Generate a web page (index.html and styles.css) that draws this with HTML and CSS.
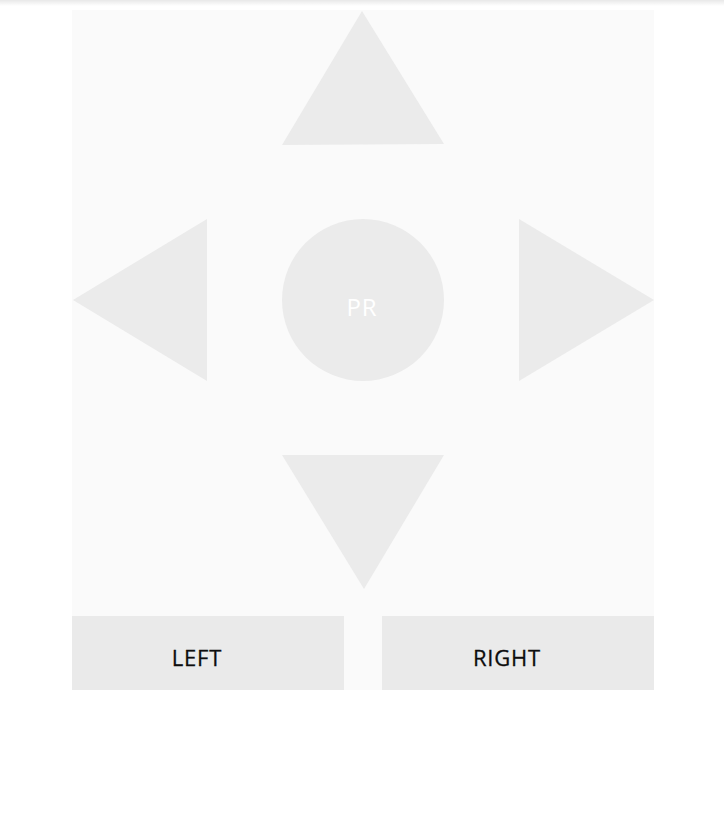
FILE: index.html
```html
<!DOCTYPE html>
<html>
<head>
<meta charset="utf-8">
<link rel="stylesheet" href="styles.css">
</head>
<body>
<div class="appbar-shadow"></div>
<main class="panel">
  <div class="pad">
    <div class="cell"></div>
    <svg class="shape up" viewBox="0 0 162 134" width="162" height="134"><polygon points="80,0 162,133 0,134"/></svg>
    <div class="cell"></div>
    <svg class="shape" viewBox="0 0 135 162" width="135" height="162"><polygon points="1,81 135,0 135,162"/></svg>
    <div class="center">PR</div>
    <svg class="shape" viewBox="0 0 135 162" width="135" height="162"><polygon points="0,0 135,81 0,162"/></svg>
    <div class="cell"></div>
    <svg class="shape" viewBox="0 0 162 134" width="162" height="134"><polygon points="0,0 162,0 82,134"/></svg>
    <div class="cell"></div>
  </div>
  <div class="buttons">
    <button class="btn">LEFT</button>
    <button class="btn">RIGHT</button>
  </div>
</main>
</body>
</html>
```

FILE: styles.css
```css
html, body {
  margin: 0;
  padding: 0;
  background: #ffffff;
}
body {
  font-family: "Open Sans", "DejaVu Sans", sans-serif;
}
.appbar-shadow {
  height: 6px;
  background: linear-gradient(to bottom, rgba(0,0,0,0.09), rgba(0,0,0,0));
}
.panel {
  width: 582px;
  margin: 4px 0 0 72px;
  background: #fafafa;
}
.pad {
  display: grid;
  grid-template-columns: 135px 162px 135px;
  grid-template-rows: 134px 162px 134px;
  column-gap: 75px;
  row-gap: 74px;
  padding: 1px 0 27px;
}
.shape {
  display: block;
  fill: #ebebeb;
}
.center {
  width: 162px;
  height: 162px;
  border-radius: 50%;
  background: #ebebeb;
  color: #ffffff;
  font-size: 24px;
  display: flex;
  align-items: center;
  justify-content: center;
  padding: 12px 2px 0 0;
  box-sizing: border-box;
  letter-spacing: 1px;
}
.buttons {
  display: flex;
  justify-content: space-between;
}
.btn {
  width: 272px;
  height: 74px;
  border: none;
  background: #eaeaea;
  color: #0d0d0d;
  font-family: "Open Sans", "DejaVu Sans", sans-serif;
  font-size: 22px;
  padding: 8px 22px 0 0;
  letter-spacing: 0.8px;
  -webkit-text-stroke: 0.3px #0d0d0d;
}
```
